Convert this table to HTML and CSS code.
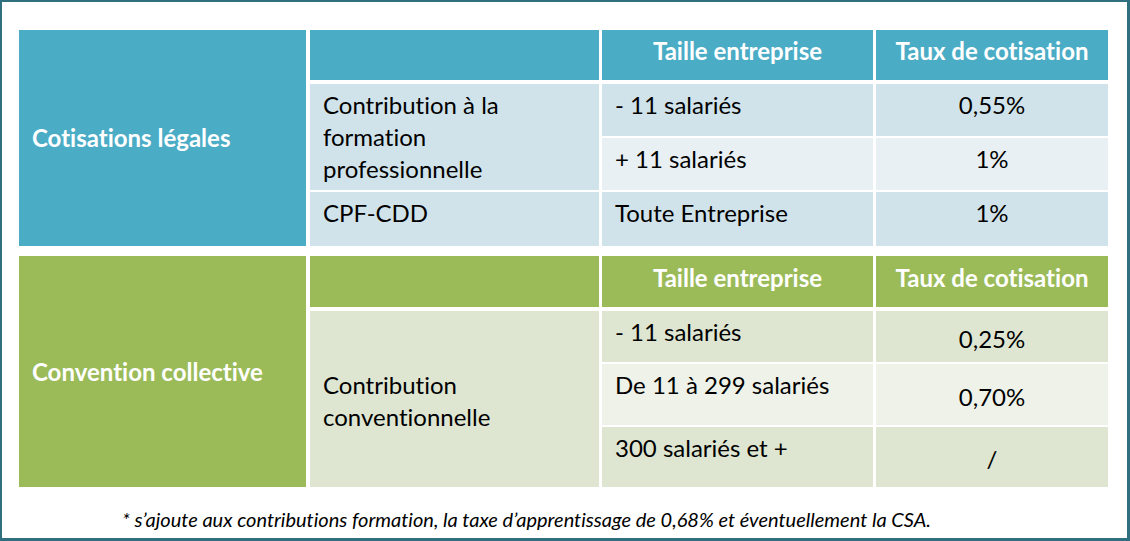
FILE: index.html
```html
<!DOCTYPE html>
<html lang="fr">
<head>
<meta charset="utf-8">
<title>Cotisations formation</title>
<link rel="stylesheet" href="styles.css">
</head>
<body>
<div class="frame">
  <section class="block teal top">
    <div class="cat">Cotisations légales</div>
    <div class="head"></div>
    <div class="head center">Taille entreprise</div>
    <div class="head center">Taux de cotisation</div>
    <div class="label span2 dark">Contribution à la<br>formation<br>professionnelle</div>
    <div class="cell dark">- 11 salariés</div>
    <div class="cell dark center">0,55%</div>
    <div class="cell light">+ 11 salariés</div>
    <div class="cell light center">1%</div>
    <div class="label dark">CPF-CDD</div>
    <div class="cell dark">Toute Entreprise</div>
    <div class="cell dark center">1%</div>
  </section>
  <section class="block green bottom">
    <div class="cat">Convention collective</div>
    <div class="head"></div>
    <div class="head center">Taille entreprise</div>
    <div class="head center">Taux de cotisation</div>
    <div class="label span3 dark mid">Contribution<br>conventionnelle</div>
    <div class="cell dark">- 11 salariés</div>
    <div class="cell dark center mid">0,25%</div>
    <div class="cell light">De 11 à 299 salariés</div>
    <div class="cell light center mid">0,70%</div>
    <div class="cell dark">300 salariés et +</div>
    <div class="cell dark center mid">/</div>
  </section>
  <p class="note">* s’ajoute aux contributions formation, la taxe d’apprentissage de 0,68% et éventuellement la CSA.</p>
</div>
</body>
</html>
```
FILE: styles.css
```css
html, body {
  margin: 0;
  padding: 0;
  background: #ffffff;
}

.frame {
  box-sizing: border-box;
  width: 1130px;
  height: 541px;
  border: 2px solid #2f6f7f;
  border-right-width: 3px;
  border-bottom-width: 3px;
  padding: 28px 0 0 17px;
  font-family: "Lato", "Open Sans", sans-serif;
  font-size: 24px;
  line-height: 32px;
  font-variant-ligatures: none;
  color: #000000;
  overflow: hidden;
}

.block {
  display: grid;
  grid-template-columns: 288px 289px 271px 232px;
  column-gap: 3px;
  row-gap: 2px;
}

.top {
  grid-template-rows: 52px 52px 52px 54px;
}

.bottom {
  margin-top: 10px;
  grid-template-rows: 53px 51px 61px 60px;
}

.cat {
  grid-row: 1 / span 4;
  display: flex;
  align-items: center;
  padding: 0 13px;
  font-weight: 700;
  color: #ffffff;
  margin-right: 1px;
}

.head {
  height: 50px;
  padding: 5px 8px 0;
  box-sizing: border-box;
  font-weight: 700;
  color: #ffffff;
  white-space: nowrap;
}

.bottom .head {
  height: 51px;
  padding-top: 6px;
}

.label,
.cell {
  padding: 5px 13px 0;
  box-sizing: border-box;
}

.span2 {
  grid-row: span 2;
}

.span3 {
  grid-row: span 3;
}

.center {
  text-align: center;
}

.mid {
  display: flex;
  align-items: center;
  padding-top: 4px;
}

.center.mid {
  justify-content: center;
}

.teal .cat,
.teal .head {
  background: #4bacc6;
}

.teal .dark {
  background: #d1e3ea;
}

.teal .light {
  background: #e8f0f3;
}

.green .cat,
.green .head {
  background: #9bbb59;
}

.green .dark {
  background: #dee6d2;
}

.green .light {
  background: #eef2e9;
}

.note {
  margin: 19px 0 0 103px;
  font-style: italic;
  font-size: 20px;
  line-height: 26px;
  white-space: nowrap;
}
```
